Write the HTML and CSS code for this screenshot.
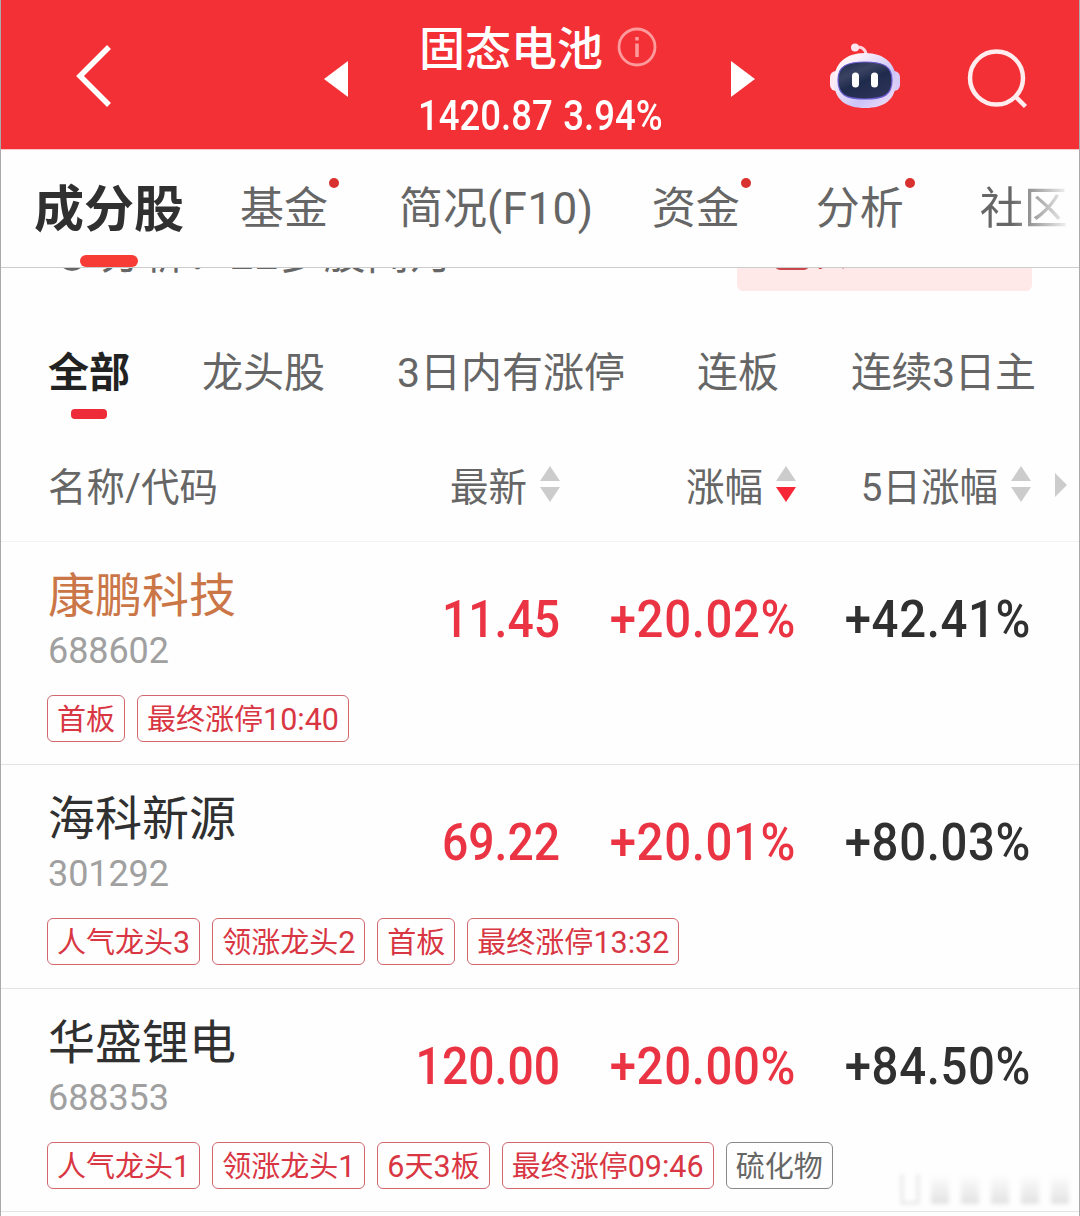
FILE: index.html
```
<!DOCTYPE html>
<html lang="zh-CN">
<head>
  <meta charset="UTF-8" />
  <meta name="viewport" content="width=device-width, initial-scale=1.0"/>
  <title>固态电池</title>
  <link rel="stylesheet" href="styles.css">
</head>
<body>

<!-- Top bar -->
<header class="topbar">
  <svg class="back" width="38" height="66" viewBox="0 0 38 66"><path d="M35 4 L6 33 L35 62" fill="none" stroke="#fff" stroke-width="5.5"/></svg>
  <svg class="prev" width="24" height="36" viewBox="0 0 24 36"><path d="M24 0V36L0 18z" fill="#fff"/></svg>
  <div class="title">
    <div class="title-name">
      <h1>固态电池</h1>
      <svg width="40" height="40" viewBox="0 0 40 40" fill="none" stroke="#ff9a9c" stroke-width="2.8"><circle cx="20" cy="20" r="18"/><path d="M20 16.500V30M20 10V13.500" stroke-width="3.500"/></svg>
    </div>
    <p><span>1420.87</span><span>3.94%</span></p>
  </div>
  <svg class="next" width="24" height="36" viewBox="0 0 24 36"><path d="M0 0V36L24 18z" fill="#fff"/></svg>
  <svg class="robot" width="72" height="68" viewBox="0 0 72 68">
    <defs>
      <linearGradient id="shell" x1="0" y1="0" x2="1" y2="1"><stop offset="0.2" stop-color="#fff3fa"/><stop offset="0.65" stop-color="#cbc4f8"/><stop offset="1" stop-color="#f6e2f5"/></linearGradient>
      <linearGradient id="face" x1="0" y1="0" x2="0.6" y2="1"><stop offset="0" stop-color="#1c2848"/><stop offset="0.35" stop-color="#3b4363"/><stop offset="0.6" stop-color="#1f2b4c"/><stop offset="1" stop-color="#2b3357"/></linearGradient>
    </defs>
    <path d="M26 6C31 4 36 7 36 13" fill="none" stroke="#ffd5e0" stroke-width="3"/>
    <circle cx="25" cy="5.500" r="4" fill="#ffe6ee"/>
    <rect x="0" y="29" width="12" height="20" rx="6" fill="#fdeaf5"/>
    <rect x="58" y="29" width="12" height="20" rx="6" fill="#d5caf8"/>
    <path d="M35 11C55 11 66 22 66 39C66 58 54 66 35 66S4 58 4 39C4 22 15 11 35 11z" fill="url(#shell)"/>
    <path d="M35 20C53 20 62 24 62 38C62 53 54 57 35 57S8 53 8 38C8 24 17 20 35 20z" fill="url(#face)" stroke="#6b5bd0" stroke-width="1.200"/>
    <rect x="22" y="30.500" width="7" height="15" rx="3.500" fill="#fff"/>
    <rect x="41" y="30.500" width="7" height="15" rx="3.500" fill="#fff"/>
  </svg>
  <svg class="search" width="62" height="62" viewBox="0 0 62 62" fill="none" stroke="#ffecee" stroke-width="4.500"><circle cx="29.500" cy="30" r="26.500"/><path d="M48 48L58.500 58.500"/></svg>
</header>

<!-- Main tabs -->
<nav class="tabs">
  <a class="active">成分股</a>
  <a class="dot">基金</a>
  <a>简况<em>(F10)</em></a>
  <a class="dot">资金</a>
  <a class="dot">分析</a>
  <a>社区</a>
</nav>

<!-- Banner scrolled under the tabs -->
<div class="banner">
  <i class="banner-icon"></i>
  <p>分析：22多股闻月</p>
  <div class="banner-btn"><i></i><span>板块成分龙头</span></div>
</div>

<!-- Filters -->
<nav class="filters">
  <a class="active">全部</a>
  <a>龙头股</a>
  <a><em>3</em>日内有涨停</a>
  <a>连板</a>
  <a>连续<em>3</em>日主</a>
</nav>

<!-- Stock table -->
<div class="grid head">
  <span>名称<em>/</em>代码</span>
  <span class="col"><span>最新</span><svg class="sort" width="20" height="36" viewBox="0 0 20 36"><path d="M10 0L20 15H0z"/><path d="M0 21H20L10 36z"/></svg></span>
  <span class="col"><span>涨幅</span><svg class="sort" width="20" height="36" viewBox="0 0 20 36"><path d="M10 0L20 15H0z"/><path class="on" d="M0 21H20L10 36z"/></svg></span>
  <span class="col"><span><em>5</em>日涨幅</span><svg class="sort" width="20" height="36" viewBox="0 0 20 36"><path d="M10 0L20 15H0z"/><path d="M0 21H20L10 36z"/></svg></span>
  <svg class="more" width="12" height="24" viewBox="0 0 12 24"><path d="M0 0L12 12L0 24z"/></svg>
</div>

<section class="stock">
  <div class="grid">
    <div class="name"><h2 class="orange">康鹏科技</h2><p>688602</p></div>
    <b class="price red">11.45</b>
    <b class="red">+20.02%</b>
    <b>+42.41%</b>
  </div>
  <div class="tags"><span>首板</span><span>最终涨停<em>10:40</em></span></div>
</section>

<section class="stock">
  <div class="grid">
    <div class="name"><h2>海科新源</h2><p>301292</p></div>
    <b class="price red">69.22</b>
    <b class="red">+20.01%</b>
    <b>+80.03%</b>
  </div>
  <div class="tags"><span>人气龙头<em>3</em></span><span>领涨龙头<em>2</em></span><span>首板</span><span>最终涨停<em>13:32</em></span></div>
</section>

<section class="stock">
  <div class="grid">
    <div class="name"><h2>华盛锂电</h2><p>688353</p></div>
    <b class="price red">120.00</b>
    <b class="red">+20.00%</b>
    <b>+84.50%</b>
  </div>
  <div class="tags"><span>人气龙头<em>1</em></span><span>领涨龙头<em>1</em></span><span><em>6</em>天<em>3</em>板</span><span>最终涨停<em>09:46</em></span><span class="gray">硫化物</span></div>
</section>

<!-- Faded mark in the corner -->
<div class="ghost"><i></i><i></i><i></i><i></i><i></i><i></i></div>

</body>
</html>
```
FILE: styles.css
```
* {
  box-sizing: border-box;
  margin: 0;
  padding: 0;
}

body {
  position: relative;
  width: 1080px;
  height: 1216px;
  overflow: hidden;
  font-family: "Noto Sans CJK SC", sans-serif;
  font-weight: 400;
  background: #fefefe;
  color: #666;
  border-left: 1px solid #aaa;
  border-right: 1px solid #aaa;
}

svg {
  display: block;
  flex: none;
}

/* digits inside chinese labels */
em {
  font-family: Roboto, sans-serif;
  font-style: normal;
  font-weight: 400;
  line-height: 1;
}

/* top bar */
.topbar {
  display: flex;
  align-items: flex-start;
  height: 150px;
  margin: 0 -1px;
  background: #f23035;
  border-bottom: 1px solid #fbc4c8;
  color: #fff;
}

.back { margin: 43px 0 0 74px; }
.prev { margin: 61px 0 0 212px; }
.next { margin: 61px 0 0 67px; }
.robot { margin: 42px 0 0 75px; }
.search { margin: 48px 0 0 65px; }

.title {
  width: 246px;
  margin: 17px 0 0 70px;
}

.title-name {
  display: flex;
  align-items: center;
  justify-content: space-between;
  height: 58px;
  padding: 2px 7px 0 1px;
}

.title h1 {
  margin-top: -4px;
  font-size: 46px;
  font-weight: 500;
  line-height: 56px;
}

.title p {
  display: flex;
  gap: 12px;
  font-family: Roboto, sans-serif;
  font-size: 42px;
  font-weight: 500;
  line-height: 82px;
  white-space: nowrap;
  transform: scaleX(0.87);
  transform-origin: left;
}

/* main tabs */
.tabs {
  display: flex;
  height: 118px;
  padding-left: 33px;
  border-bottom: 1px solid #ccc;
  font-size: 44px;
  line-height: 111px;
  white-space: nowrap;
}

.tabs a {
  position: relative;
  flex: none;
  margin-right: 58px;
}

.tabs em { letter-spacing: 0.5px; }

.tabs a:nth-child(1) { margin-right: 56px; }
.tabs a:nth-child(2) { margin-right: 71px; }
.tabs a:nth-child(4),
.tabs a:nth-child(5) { margin-right: 76px; }

.tabs .active {
  font-size: 50px;
  font-weight: 700;
  color: #303030;
}

.tabs .active::after {
  content: "";
  position: absolute;
  left: 46px;
  bottom: 0;
  width: 58px;
  height: 12px;
  border-radius: 6px;
  background: #f73c36;
}

.tabs .dot::after {
  content: "";
  position: absolute;
  right: -11px;
  top: 28px;
  width: 10px;
  height: 10px;
  border-radius: 50%;
  background: #d93030;
}

.tabs a:last-child {
  width: 88px;
  margin-right: 0;
  background: linear-gradient(90deg, #666 35%, #fefefe 105%);
  -webkit-background-clip: text;
  background-clip: text;
  color: transparent;
}

/* banner */
.banner {
  display: flex;
  align-items: flex-end;
  height: 23px;
  padding: 0 47px 0 57px;
  overflow: hidden;
  font-size: 42px;
}

.banner-icon {
  width: 28px;
  height: 28px;
  margin: 0 14px 20px 0;
  border: 3px solid #666;
  border-radius: 50%;
}

.banner p {
  line-height: 58px;
  margin-bottom: 11px;
  letter-spacing: 1.500px;
}

.banner-btn {
  display: flex;
  align-items: flex-end;
  width: 295px;
  height: 80px;
  margin-left: auto;
  padding: 0 38px 21px;
  border-radius: 6px;
  background: #ffe8e8;
  color: #c33;
  font-size: 30px;
  line-height: 33px;
}

.banner-btn i {
  width: 34px;
  height: 30px;
  margin-right: 8px;
  border-radius: 5px;
  background: #c8474b;
}

/* filters */
.filters {
  display: flex;
  gap: 72px;
  height: 130px;
  margin-top: 36px;
  padding-left: 47px;
  font-size: 41px;
  line-height: 84px;
  white-space: nowrap;
}

.filters a:last-child { letter-spacing: -0.500px; }

.filters .active {
  position: relative;
  font-weight: 700;
  color: #222;
}

.filters .active::after {
  content: "";
  position: absolute;
  left: 23px;
  top: 82px;
  width: 36px;
  height: 10px;
  border-radius: 4px;
  background: #ee2b38;
}

/* stock table */
.grid {
  display: grid;
  grid-template-columns: 260px 252px 236px 235px 36px;
  padding-left: 47px;
}

.head {
  align-items: center;
  height: 84.500px;
  padding-bottom: 28px;
  border-bottom: 1px solid #f2f2f2;
  font-size: 38.500px;
  line-height: 50px;
}

.head span { margin-top: -1px; }

.col {
  display: flex;
  justify-content: flex-end;
  align-items: center;
  gap: 13px;
}

.sort path,
.more path { fill: #ccc; }
.sort .on { fill: #f62736; }
.more { justify-self: end; }

.stock {
  height: 223.500px;
  border-bottom: 1px solid #e4e4e4;
}

.stock .grid { height: 153px; }

.name h2 {
  padding-top: 18px;
  font-size: 47px;
  font-weight: 400;
  line-height: 64px;
  color: #303030;
}

.name .orange { color: #cb7647; }

.name p {
  font-family: Roboto, sans-serif;
  font-size: 36px;
  font-weight: 400;
  line-height: 54px;
  letter-spacing: -0.100px;
  color: #a0a0a0;
}

.grid b {
  text-align: right;
  font-family: Roboto, sans-serif;
  font-size: 52px;
  font-weight: 500;
  line-height: 155px;
  letter-spacing: 0.700px;
  color: #303030;
  transform: scaleX(0.91);
  transform-origin: right;
}

.grid .price {
  letter-spacing: 0;
  transform: scaleX(0.89);
}

.grid .red { color: #ea3443; }

.tags {
  display: flex;
  gap: 12px;
  padding-left: 46px;
}

.tags span {
  height: 47px;
  padding: 0 9px;
  border: 1px solid #d0686e;
  border-radius: 6px;
  font-size: 29px;
  line-height: 43px;
  color: #d93643;
  white-space: nowrap;
}

.tags em { font-size: 30.500px; }

.tags .gray {
  border-color: #888;
  color: #666;
}

/* corner mark */
.ghost {
  position: absolute;
  right: 10px;
  bottom: 12px;
  display: flex;
  gap: 12px;
  align-items: flex-end;
  filter: blur(2px);
}

.ghost i {
  width: 18px;
  height: 30px;
  background: linear-gradient(#fefefe, #e2e2e2);
}

.ghost i:first-child {
  background: none;
  border: 2px solid #ddd;
  border-top: 0;
}
```
